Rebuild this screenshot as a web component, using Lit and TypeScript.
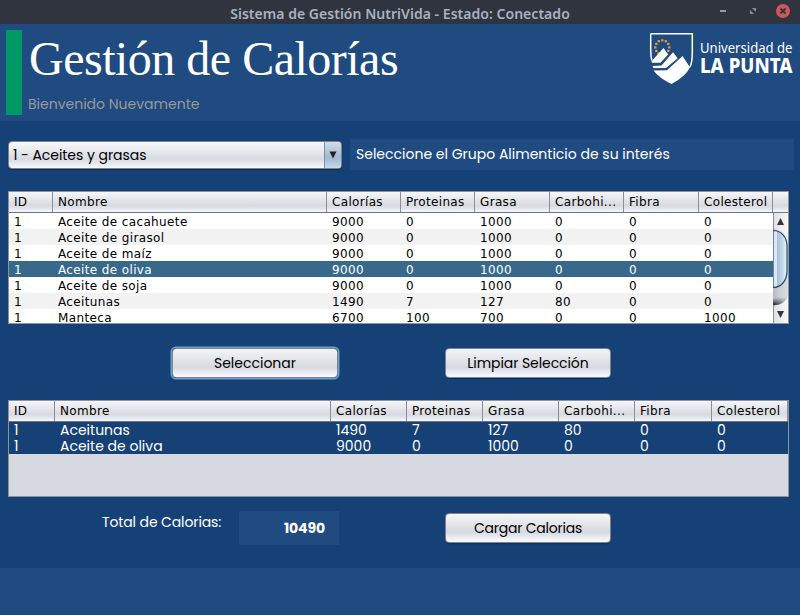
import { LitElement, html, svg, css } from "lit";
import { customElement, property } from "lit/decorators.js";
import { classMap } from "lit/directives/class-map.js";

const COLUMNS = ["ID", "Nombre", "Calorías", "Proteinas", "Grasa", "Carbohi...", "Fibra", "Colesterol"];

const FOODS = [
  ["1", "Aceite de cacahuete", "9000", "0", "1000", "0", "0", "0"],
  ["1", "Aceite de girasol", "9000", "0", "1000", "0", "0", "0"],
  ["1", "Aceite de maíz", "9000", "0", "1000", "0", "0", "0"],
  ["1", "Aceite de oliva", "9000", "0", "1000", "0", "0", "0"],
  ["1", "Aceite de soja", "9000", "0", "1000", "0", "0", "0"],
  ["1", "Aceitunas", "1490", "7", "127", "80", "0", "0"],
  ["1", "Manteca", "6700", "100", "700", "0", "0", "1000"],
];

const CHOSEN = [
  ["1", "Aceitunas", "1490", "7", "127", "80", "0", "0"],
  ["1", "Aceite de oliva", "9000", "0", "1000", "0", "0", "0"],
];

@customElement("food-table")
class FoodTable extends LitElement {
  @property({ attribute: false }) rows: string[][] = [];
  @property({ attribute: false }) widths: number[] = [];
  @property({ type: Number }) selected = -1;
  @property({ type: Boolean }) scroll = false;
  @property({ type: Boolean }) dark = false;

  static styles = css`
    :host { display: block; box-sizing: border-box; border: 1px solid #8e929b; background: #d6d9e0; overflow: hidden;
      font: 12px/16px "DejaVu Sans", sans-serif; letter-spacing: 0.37px; color: #000; }
    .grid { display: grid; white-space: nowrap; }
    .head { height: 20px; border-bottom: 1px solid #72757d; letter-spacing: 0.33px;
      background: linear-gradient(#f6f7fa 0, #e6e7eb 35%, #d8dae0 68%, #e1e3ec 80%, #f5f7fd 100%); }
    .head span { padding: 2px 0 0 5px; border-right: 1px solid #8b8e97; }
    .cell { padding-left: 5px; height: 16px; line-height: 18px; }
    .body { display: flex; }
    .rows { flex: 1; }
    .row { background: #fff; }
    .row.even { background: #f2f2f2; }
    .row.selected { background: #39698a; color: #fff; }
    .row.dark { background: #164176; color: #fff; font: 14px/16px Poppins, Inter, sans-serif; letter-spacing: 0; }
    .row.dark .cell { line-height: 16px; }
    .bar { display: block; width: 15px; height: 110px; }
  `;

  render() {
    const columns = this.widths.map((w) => w + "px").join(" ");
    return html`
      <div class="grid head" style="grid-template-columns:${columns}">
        ${COLUMNS.map((c) => html`<span>${c}</span>`)}
      </div>
      <div class="body">
        <div class="rows">
          ${this.rows.map((r, i) => html`
            <div class=${classMap({ grid: true, row: true, even: i % 2 === 1, selected: i === this.selected, dark: this.dark })}
              style="grid-template-columns:${columns}">
              ${r.map((v) => html`<span class="cell">${v}</span>`)}
            </div>`)}
        </div>
        ${this.scroll ? this.scrollbar() : ""}
      </div>`;
  }

  scrollbar() {
    return html`<svg class="bar" viewBox="0 0 15 110">
      <defs>
        <linearGradient id="track"><stop offset="0" stop-color="#b4b7be"/><stop offset=".35" stop-color="#c9ccd2"/><stop offset="1" stop-color="#dcdee4"/></linearGradient>
        <linearGradient id="thumb"><stop offset="0" stop-color="#d5e3f2"/><stop offset=".25" stop-color="#dce9f6"/><stop offset=".32" stop-color="#a9c0d8"/><stop offset=".7" stop-color="#c4dbee"/><stop offset="1" stop-color="#e9fbff"/></linearGradient>
        <linearGradient id="btn"><stop offset="0" stop-color="#dfe0e4"/><stop offset=".6" stop-color="#eeeff2"/><stop offset="1" stop-color="#f8f8fa"/></linearGradient>
        <linearGradient id="shade"><stop offset="0" stop-color="#2c2e33"/><stop offset=".4" stop-color="#5c5f66"/><stop offset="1" stop-color="#c9cbd2"/></linearGradient>
        <linearGradient id="fade" x2="0" y2="1"><stop offset="0" stop-color="#cdd0d7"/><stop offset="1" stop-color="#cdd0d7" stop-opacity="0"/></linearGradient>
      </defs>
      <rect width="15" height="110" fill="url(#track)"/>
      <rect y="84" width="15" height="12" fill="url(#shade)"/>
      <rect y="84" width="15" height="7" fill="url(#fade)"/>
      <path d="M0 17.500C8 17.500 14 24 14 33V58C14 68 8 74.500 0 74.500Z" fill="url(#thumb)" stroke="#2d4a68" stroke-width="1.200"/>
      <path d="M0 0H15V31Q13 17 0 16Z" fill="url(#btn)"/>
      <path d="M0 110H15V83Q12 92 0 92.500Z" fill="url(#btn)"/>
      <path d="M4 12L7.500 5L11 12Z" fill="#323338"/>
      <path d="M4 98L7.500 105L11 98Z" fill="#323338"/>
      <path d="M.5 0V17M.5 92V110" stroke="#8b8e97"/>
    </svg>`;
  }
}

@customElement("app-root")
class AppRoot extends LitElement {
  static styles = css`
    :host { display: flex; flex-direction: column; width: 800px; height: 615px; overflow: hidden; background: #164176;
      font: 14px/20px Poppins, Inter, sans-serif; color: #fff; }
    * { box-sizing: border-box; }
    .title { height: 24px; display: grid; grid-template-columns: 100px 1fr 100px; align-items: center; background: #2f343f;
      color: #a9b1bf; font: 600 14px/24px "Noto Sans", sans-serif; text-align: center; }
    .title b { font-weight: inherit; white-space: nowrap; padding-top: 2px; height: 24px; letter-spacing: 0.03px; }
    .controls { display: block; }
    header { height: 97px; padding: 6px 7px 0 6px; display: flex; background: #204b80; }
    .mark { width: 16px; height: 85px; background: #009966; }
    .heading { flex: 1; padding-left: 6px; }
    h1 { margin: 0; padding-left: 1px; height: 62px; font: 48px/58px "Liberation Serif", serif; white-space: nowrap; letter-spacing: -0.5px; }
    .welcome { color: #999; letter-spacing: 0; line-height: 24px; }
    .logo { width: 145px; height: 56px; margin-top: 2px; overflow: visible; }
    main { height: 447px; padding: 18px 6px 0 8px; }
    .pick { display: flex; height: 31px; }
    .combo { width: 334px; height: 28px; margin-top: 2px; display: flex; border: 1px solid #7e828c; border-radius: 4px; overflow: hidden; color: #000;
      background: linear-gradient(#f9f9fc, #e4e6ea 40%, #d7dae1 65%, #f6f8ff); box-shadow: 0 1px 1px #0d2d55; }
    .combo span { flex: 1; padding-left: 4px; line-height: 26px; letter-spacing: -0.05px; }
    .arrow { width: 17px; border-left: 1px solid #7390ad; background: linear-gradient(#d3dde7, #a9bed1 50%, #a5bbcf 65%, #c9dbea); display: block; }
    .hint { margin-left: 8px; flex: 1; background: #204b80; padding-left: 6px; line-height: 30px; }
    .t1 { width: 781px; height: 133px; margin-top: 21px; }
    .actions { display: flex; margin-top: 24px; padding-left: 164px; gap: 107px; }
    .btn { width: 166px; height: 30px; border: 1px solid #80838c; border-radius: 4px; color: #000; font: inherit; line-height: 28px; padding: 0; text-align: center;
      background: linear-gradient(#f4f5f8, #e2e4e8 40%, #d6d9df 65%, #f6f8ff 95%); box-shadow: 0 1px 1px #102f57; }
    .clear { letter-spacing: -0.08px; }
    .focus { box-shadow: 0 0 0 1.5px #6ba0cd; }
    .t2 { width: 781px; height: 97px; margin-top: 22px; }
    .total { display: flex; padding-left: 94px; height: 62px; }
    .total span { width: 137px; padding-top: 15px; letter-spacing: -0.12px; }
    .sum { width: 100px; height: 34px; margin-top: 14px; padding-right: 14px; background: #204b80; text-align: right; font-weight: 700; line-height: 34px; letter-spacing: -0.1px; }
    .load { margin: 16px 0 0 106px; letter-spacing: -0.22px; }
    footer { flex: 1; background: #204b80; }
  `;

  logo() {
    const dots = [[-6, 3.5], [-7, 0], [-6, -3.5], [-3.5, -6.2], [0, -7], [3.5, -6.2], [6, -3.5], [7, 0], [6, 3.5], [-3.8, 6]];
    return html`<svg class="logo" viewBox="648 32 145 56">
      <path d="M650.700 33.700H692.300V52C692.300 60 691.500 64 690 67" fill="none" stroke="#fff" stroke-width="1.500"/>
      <path d="M650.700 33.700V50Q650.700 56 651.800 60.500" fill="none" stroke="#fff" stroke-width="1.500"/>
      ${dots.map(([x, y]) => svg`<rect x=${661.2 + x} y=${46.3 + y} width="2.200" height="2.200" fill="#f0a02c"/>`)}
      <path d="M651.500 61.300L663.500 48L668.200 54.500L660.500 62.800H652Z" fill="#fff"/>
      <path d="M652.500 66L661.500 65.400L673 52.300L678.300 59L666 68.200H653.500Z" fill="#fff"/>
      <path d="M653.500 70.500L667 70.200L682.500 56L690 67.500Q685 77 671.500 84Q659 78 653.500 70.500Z" fill="#fff"/>
      <path d="M652 63.800H661L670 54M653 68.800H666L680 57" fill="none" stroke="#204b80" stroke-width="1.100"/>
      <text x="700" y="53" font-family="Noto Sans, sans-serif" font-size="15" fill="#fff" textLength="92.500" lengthAdjust="spacingAndGlyphs">Universidad de</text>
      <text x="700" y="73" font-family="Noto Sans, sans-serif" font-weight="800" font-size="20.500" fill="#fff" textLength="92.500" lengthAdjust="spacingAndGlyphs">LA PUNTA</text>
    </svg>`;
  }

  render() {
    return html`
      <div class="title">
        <i></i><b>Sistema de Gestión NutriVida - Estado: Conectado</b>
        <svg class="controls" width="100" height="24" viewBox="700 0 100 24">
          <rect x="720" y="10" width="6" height="2" fill="#9299a6"/>
          <path d="M752 8H756V12ZM750 10V14H754Z" fill="#878e9b"/>
          <circle cx="783" cy="11" r="7" fill="#cc575d"/>
          <path d="M780.500 8.500L785.500 13.500M785.500 8.500L780.500 13.500" stroke="#2f343f" stroke-width="1.800"/>
        </svg>
      </div>
      <header>
        <div class="mark"></div>
        <div class="heading"><h1>Gestión de Calorías</h1><div class="welcome">Bienvenido Nuevamente</div></div>
        ${this.logo()}
      </header>
      <main>
        <div class="pick">
          <div class="combo"><span>1 - Aceites y grasas</span>
            <svg class="arrow" viewBox="0 0 16 26"><path d="M4.500 9.500H11.500L8 16.500Z" fill="#222327"/></svg>
          </div>
          <div class="hint">Seleccione el Grupo Alimenticio de su interés</div>
        </div>
        <food-table class="t1" .rows=${FOODS} .widths=${[44, 274, 74, 74, 75, 74, 75, 74]} .selected=${3} scroll></food-table>
        <div class="actions">
          <button class="btn focus">Seleccionar</button>
          <button class="btn clear">Limpiar Selección</button>
        </div>
        <food-table class="t2" .rows=${CHOSEN} .widths=${[46, 276, 76, 76, 76, 76, 77, 76]} dark></food-table>
        <div class="total">
          <span>Total de Calorias:</span>
          <div class="sum">10490</div>
          <button class="btn load">Cargar Calorias</button>
        </div>
      </main>
      <footer></footer>`;
  }
}
